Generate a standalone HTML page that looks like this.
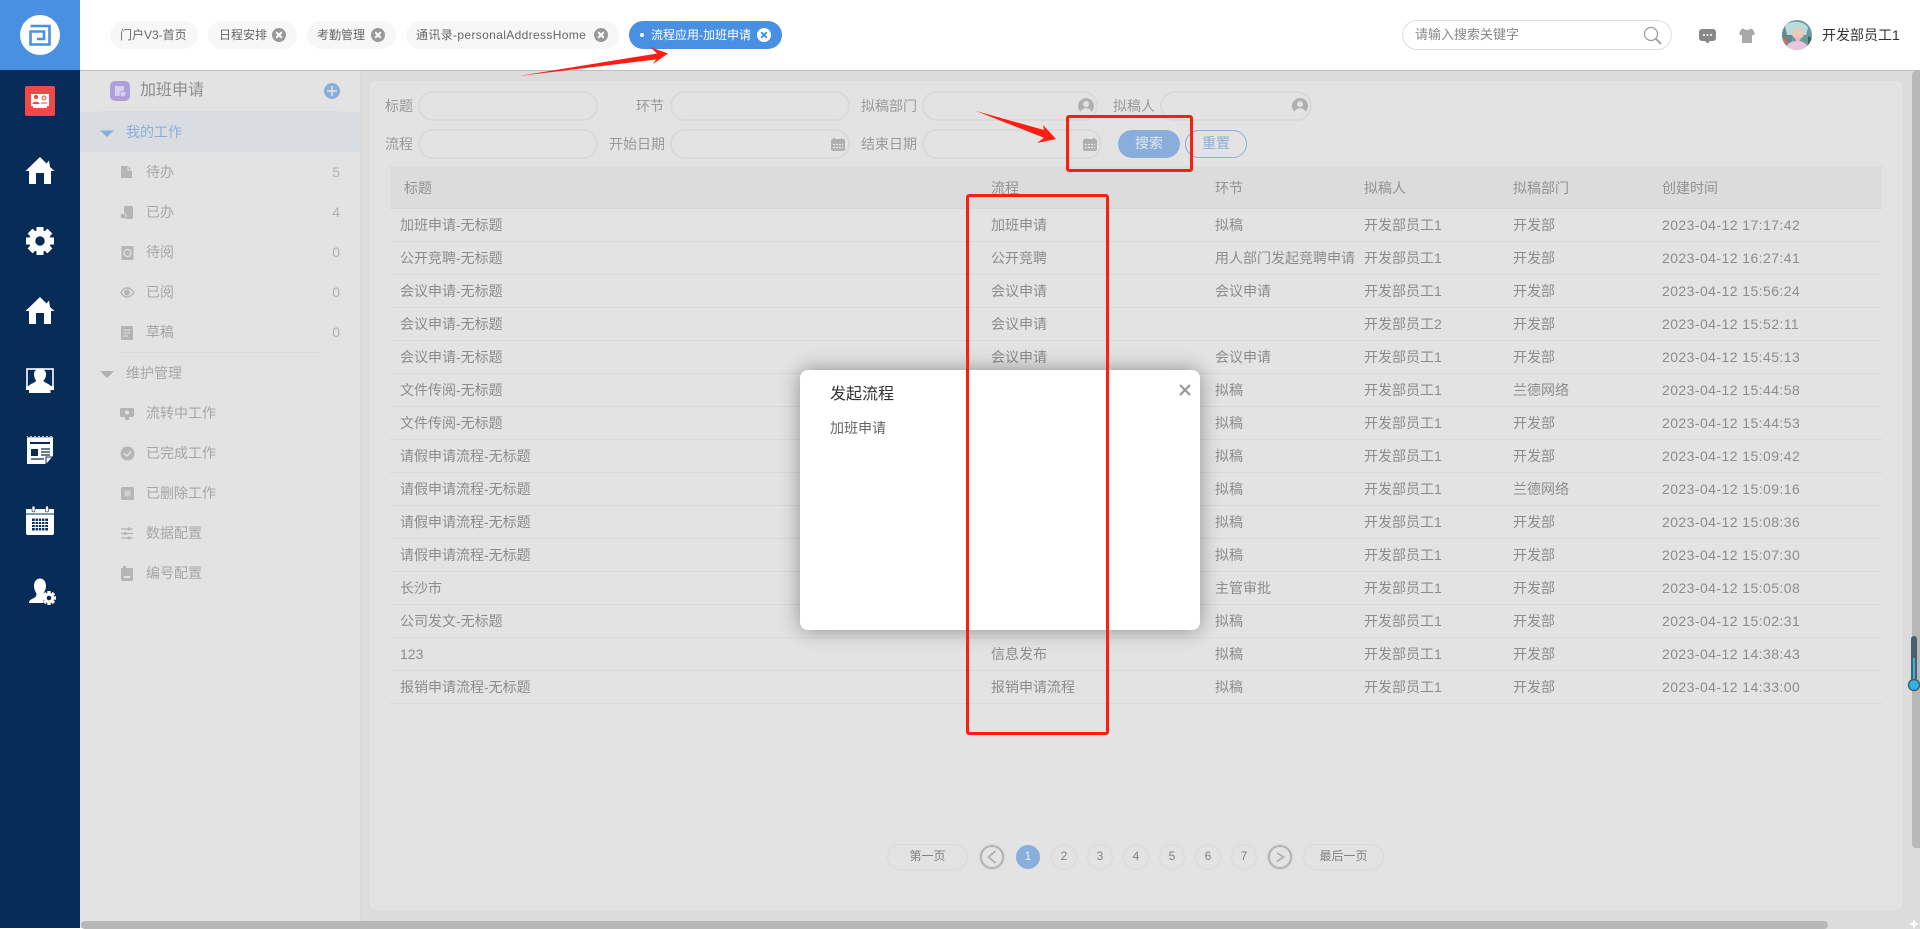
<!DOCTYPE html>
<html lang="zh"><head><meta charset="utf-8"><title>流程应用-加班申请</title>
<style>
*{box-sizing:border-box}
html,body{margin:0;padding:0;width:1920px;height:929px;overflow:hidden;background:#fff;font-family:"Liberation Sans","Noto Sans CJK SC",sans-serif;font-size:14px}
.a{position:absolute;white-space:nowrap}
.tab{position:absolute;top:21px;height:28px;border-radius:14px;background:#f7f7f7;color:#666;font-size:12px;line-height:28px;white-space:nowrap}
.x{position:absolute;top:7px;width:14px;height:14px;border-radius:50%;background:#999;color:#fff}
.x:before,.x:after{content:"";position:absolute;left:3px;top:6px;width:8px;height:2px;background:currentColor;transform:rotate(45deg)}
.x:after{transform:rotate(-45deg)}
.side{position:absolute;left:146px;color:#a6a6a6;font-size:14px;line-height:20px;white-space:nowrap}
.cnt{position:absolute;right:1580px;color:#b0b0b0;font-size:14px;line-height:20px}
.lb{position:absolute;color:#999;font-size:14px;line-height:20px;text-align:right;white-space:nowrap}
.in{position:absolute;height:30px;border:2px solid #dadada;border-radius:15px;background:#e3e3e3}
table{position:absolute;left:390px;top:166px;width:1492px;border-collapse:separate;border-spacing:0;table-layout:fixed;color:#8c8c8c;font-size:14px}
th{height:43px;background:#dcdcdc;font-weight:400;text-align:left;padding:2px 0 0 10px;border-bottom:1px solid #d8d8d8;color:#929292}
td{height:33px;padding:0 0 1px 10px;border-bottom:1px solid #d9d9d9;white-space:nowrap}
td:last-child{letter-spacing:.43px}
.pg{position:absolute;top:844px;height:26px;border:1.5px solid #dadada;border-radius:13px;text-align:center;font-size:12px;line-height:23px;color:#808080}
.rd{position:absolute;border:3px solid #ff1c10;border-radius:3px;z-index:30}
</style></head><body>

<!-- left nav -->
<div class="a" style="left:0;top:0;width:80px;height:928px;background:#082c58"></div>
<div class="a" style="left:0;top:0;width:80px;height:70px;background:#4a90e2"></div>
<svg class="a" style="left:0;top:0;z-index:3" width="80" height="640" viewBox="0 0 80 640">
<circle cx="40" cy="35" r="20" fill="#fff"/>
<path d="M30.500 26H49.500V44.500H30.500V31.500H44V39H37" fill="none" stroke="#4a90e2" stroke-width="2.600"/>
<rect x="25" y="86" width="30" height="30" rx="2" fill="#f24848"/>
<path d="M31 94H49V106H47V108H33V106H31Z" fill="#fff"/>
<circle cx="36" cy="97" r="2.200" fill="#f24848"/><path d="M32.500 104c0-3 7-3 7 0z" fill="#f24848"/><circle cx="44" cy="98" r="2" fill="none" stroke="#f24848"/><path d="M41 103H47" stroke="#f24848"/>
<path d="M40 157L46.500 163.500L49 160.500L50 167L54.500 171H51V184H44V173H36V184H29V171H25.500Z" fill="#fff"/>
<path d="M40 297L46.500 303.500L49 300.500L50 307L54.500 311H51V324H44V313H36V324H29V311H25.500Z" fill="#fff"/>
<g fill="#fff" transform="translate(40 241)">
<rect x="-3.500" y="-14" width="7" height="28"/><rect x="-3.500" y="-14" width="7" height="28" transform="rotate(45)"/><rect x="-3.500" y="-14" width="7" height="28" transform="rotate(90)"/><rect x="-3.500" y="-14" width="7" height="28" transform="rotate(135)"/>
<circle r="11"/><circle r="4.700" fill="#082c58"/></g>
<rect x="27" y="369" width="26" height="18" fill="none" stroke="#fff" stroke-width="1.600"/>
<path d="M26 386H54V390H26Z" fill="#fff"/>
<path d="M34 374c0-7 12-7 12 0c0 3-1 5-2.500 6.500c0 2 4 2.500 7 5v7.500H29v-7.500c3-2.500 7-3 7-5C35 379 34 377 34 374Z" fill="#fff"/>
<path d="M27 438H53V456L46 464H27Z" fill="#fff"/>
<path d="M27 436.500l2 2 2-2 2 2 2-2 2 2 2-2 2 2 2-2 2 2 2-2 2 2 2-2 2 2" fill="none" stroke="#fff"/>
<path d="M30 443H50" stroke="#082c58" stroke-width="2"/>
<rect x="31" y="449" width="7" height="7" fill="#082c58"/>
<path d="M41 449H50M41 452H50M41 455H50M31 459H44" stroke="#082c58" stroke-width="1.300"/>
<path d="M46 464V457H53" fill="none" stroke="#082c58"/>
<path d="M26 509H54V533a2 2 0 0 1-2 2H28a2 2 0 0 1-2-2Z" fill="#fff"/>
<rect x="32" y="506" width="3" height="6" rx="1.500" fill="#fff" stroke="#082c58" stroke-width=".6"/><rect x="45.500" y="506" width="3" height="6" rx="1.500" fill="#fff" stroke="#082c58" stroke-width=".6"/>
<path d="M26 514H54" stroke="#082c58"/>
<path d="M32 518.500H48v12H32Z" fill="#082c58"/>
<path d="M35.200 518v13M38.400 518v13M41.600 518v13M44.800 518v13M32 521.500H48M32 524.500H48M32 527.500H48" stroke="#fff" stroke-width=".9"/>
<path d="M34 586c0-10 12-10 12 0c0 3-1.500 5.500-2.500 7c0 2 1 3 2.500 3.500c-2 2-3 4-3 6.500H29c0-3 2-3.500 5-5c2-1 2.500-2.500 2.500-4.500C35.500 592 34 589 34 586Z" fill="#fff"/>
<g fill="#fff" transform="translate(49 598)"><rect x="-1.700" y="-7" width="3.400" height="14"/><rect x="-1.700" y="-7" width="3.400" height="14" transform="rotate(45)"/><rect x="-1.700" y="-7" width="3.400" height="14" transform="rotate(90)"/><rect x="-1.700" y="-7" width="3.400" height="14" transform="rotate(135)"/><circle r="5"/><circle r="2.300" fill="#082c58"/></g>
</svg>

<!-- header -->
<div class="a" style="left:80px;top:70px;width:1840px;height:1px;background:#bdbdbd"></div>
<div class="tab" style="left:110px;width:88px;padding-left:10px">门户V3-首页</div>
<div class="tab" style="left:208px;width:89px;padding-left:11px">日程安排<span class="x" style="left:64px"></span></div>
<div class="tab" style="left:307px;width:89px;padding-left:10px">考勤管理<span class="x" style="left:64px"></span></div>
<div class="tab" style="left:406px;width:213px;padding-left:10px;letter-spacing:.35px">通讯录-personalAddressHome<span class="x" style="left:188px"></span></div>
<div class="tab" style="left:629px;width:153px;padding-left:22px;background:#4a90e2;color:#fff"><span style="position:absolute;left:11px;top:12px;width:4px;height:4px;border-radius:50%;background:#fff"></span>流程应用-加班申请<span class="x" style="left:128px;background:#fff;color:#4a90e2"></span></div>

<div class="a" style="left:1402px;top:20px;width:270px;height:30px;border:1px solid #ddd;border-radius:15px;background:#fff;color:#888;font-size:13px;line-height:27px;padding-left:12px">请输入搜索关键字</div>
<svg class="a" style="left:1640px;top:20px" width="280" height="32" viewBox="1640 20 280 32">
<circle cx="1651" cy="34" r="6.500" fill="none" stroke="#999" stroke-width="1.200"/><path d="M1656 39L1661 44" stroke="#999" stroke-width="1.800"/>
<path d="M1702 29h11a3 3 0 0 1 3 3v6a3 3 0 0 1-3 3h-3l-2.500 2.500l-2.500-2.500h-3a3 3 0 0 1-3-3v-6a3 3 0 0 1 3-3Z" fill="#888"/>
<circle cx="1704" cy="35" r="1" fill="#fff"/><circle cx="1707.500" cy="35" r="1" fill="#fff"/><circle cx="1711" cy="35" r="1" fill="#fff"/>
<path d="M1743.500 28.500L1741 29.500L1739 34L1741.500 35.500L1742 35V43H1752V35L1752.500 35.500L1755 34L1753 29.500L1750.500 28.500C1749.500 30.500 1744.500 30.500 1743.500 28.500Z" fill="#a8a8a8"/>
<defs><clipPath id="av"><circle cx="1797" cy="35" r="15"/></clipPath></defs>
<g clip-path="url(#av)">
<rect x="1782" y="20" width="30" height="30" fill="#6f9b9e"/>
<rect x="1782" y="20" width="10" height="30" fill="#6a8790"/>
<path d="M1785 26c3-6 20-6 23 2l-2 7h-19Z" fill="#b8dcdc"/>
<circle cx="1798" cy="33" r="6" fill="#eccab8"/>
<path d="M1794 28h8v3h-8Z" fill="#d9d0c0"/>
<circle cx="1798" cy="39" r="2.500" fill="#f4b6c6"/>
<path d="M1786 50c0-7 6-9 11-9s11 2 11 9Z" fill="#e8c6de"/>
<path d="M1783 38l5 4l-3 6l-3-3Z" fill="#c9705f"/>
<path d="M1808 36l4 2v8l-4-2Z" fill="#44626a"/>
</g>
</svg>
<div class="a" style="left:1822px;top:25px;color:#333;line-height:20px">开发部员工1</div>

<!-- sidebar -->
<div class="a" style="left:80px;top:71px;width:280px;height:857px;background:#e3e3e3"></div>
<div class="a" style="left:360px;top:71px;width:2px;height:850px;background:#d8d8d8"></div>
<svg class="a" style="left:100px;top:71px" width="250" height="600" viewBox="100 71 250 600">
<rect x="110" y="81" width="20" height="20" rx="5" fill="#b09fd8"/>
<path d="M115 86H124V90L121 92.500L120 96H115Z" fill="#d8cfec"/><circle cx="123" cy="94" r="3" fill="#d8cfec" stroke="#b09fd8"/>
<circle cx="332" cy="91" r="8" fill="#8aaedb"/><path d="M332 86V96M327 91H337" stroke="#e3e3e3" stroke-width="1.500"/>
<path d="M100 371H114L107 378Z" fill="#b0b0b0"/>
<g fill="#b5b5b5">
<path d="M121 166H128L132 170V178H121Z"/><path d="M128 166V170H132" fill="none" stroke="#e3e3e3"/>
<path d="M124 207a2 2 0 0 1 2-1h5a2 2 0 0 1 2 2v10a1 1 0 0 1-1 1h-8Z"/><circle cx="123" cy="216" r="3" stroke="#e3e3e3"/>
<rect x="121.500" y="246" width="12" height="14" rx="1"/><circle cx="127.500" cy="253" r="3.500" fill="none" stroke="#e3e3e3" stroke-width="1.200"/>
<path d="M121 292.500C124 286.500 130 286.500 134 292.500C130 298.500 124 298.500 121 292.500Z" fill="none" stroke="#b5b5b5" stroke-width="1.500"/><circle cx="127" cy="292.500" r="3"/>
<path d="M121 327a1 1 0 0 1 1-1h10a1 1 0 0 1 1 1v12a1 1 0 0 1-1 1h-10a1 1 0 0 1-1-1Z"/><path d="M123.500 330H130M123.500 333H130M123.500 336H128" stroke="#e3e3e3"/>
<rect x="120" y="408" width="14" height="9" rx="1.500"/><rect x="125" y="417" width="4" height="3"/><circle cx="127" cy="412.500" r="2" fill="#e3e3e3"/>
<circle cx="127.500" cy="453.500" r="7"/><path d="M124 453.500L127 456L131 451.500" fill="none" stroke="#e3e3e3" stroke-width="1.500"/>
<rect x="121" y="487" width="13" height="13" rx="1.500"/><rect x="124.500" y="490.500" width="6" height="6" fill="#d0d0d0"/>
<path d="M121 529H133M121 533.500H133M121 538H133" stroke="#b5b5b5" stroke-width="1.300"/><circle cx="129" cy="529" r="1.600"/><circle cx="125" cy="533.500" r="1.600"/><circle cx="129" cy="538" r="1.600"/>
<rect x="121" y="568" width="12" height="13" rx="1.500"/><rect x="123" y="566" width="3" height="5"/><rect x="124" y="576" width="6" height="2" fill="#e3e3e3"/>
</g>
</svg>
<div class="a" style="left:140px;top:80px;color:#8c8c8c;font-size:16px;line-height:22px">加班申请</div>
<div class="a" style="left:100px;top:111px;width:240px;height:1px;background:#dcdcdc"></div>
<div class="a" style="left:80px;top:112px;width:280px;height:40px;background:#d9dde1"></div>
<svg class="a" style="left:100px;top:112px" width="20" height="40"><path d="M0 18.500H14L7 25Z" fill="#8aaedb"/></svg>
<div class="a" style="left:126px;top:122px;color:#8aaedb;line-height:20px">我的工作</div>
<div class="side" style="top:162px">待办</div><div class="cnt" style="top:162px">5</div>
<div class="side" style="top:202px">已办</div><div class="cnt" style="top:202px">4</div>
<div class="side" style="top:242px">待阅</div><div class="cnt" style="top:242px">0</div>
<div class="side" style="top:282px">已阅</div><div class="cnt" style="top:282px">0</div>
<div class="side" style="top:322px">草稿</div><div class="cnt" style="top:322px">0</div>
<div class="a" style="left:120px;top:352px;width:200px;height:1px;background:#dcdcdc"></div>
<div class="side" style="left:126px;top:363px">维护管理</div>
<div class="side" style="top:403px">流转中工作</div>
<div class="side" style="top:443px">已完成工作</div>
<div class="side" style="top:483px">已删除工作</div>
<div class="side" style="top:523px">数据配置</div>
<div class="side" style="top:563px">编号配置</div>

<!-- main -->
<div class="a" style="left:362px;top:71px;width:1558px;height:858px;background:#dcdcdc"></div>
<div class="a" style="left:370px;top:81px;width:1532px;height:829px;background:#e3e3e3;border-radius:6px"></div>

<div class="lb" style="left:370px;width:43px;top:96px">标题</div>
<div class="in" style="left:418px;top:91px;width:180px"></div>
<div class="lb" style="left:620px;width:44px;top:96px">环节</div>
<div class="in" style="left:670px;top:91px;width:180px"></div>
<div class="lb" style="left:861px;width:56px;top:96px">拟稿部门</div>
<div class="in" style="left:922px;top:91px;width:176px"></div>
<div class="lb" style="left:1113px;width:42px;top:96px">拟稿人</div>
<div class="in" style="left:1160px;top:91px;width:152px"></div>
<div class="lb" style="left:370px;width:43px;top:134px">流程</div>
<div class="in" style="left:418px;top:129px;width:180px"></div>
<div class="lb" style="left:609px;width:56px;top:134px">开始日期</div>
<div class="in" style="left:670px;top:129px;width:180px"></div>
<div class="lb" style="left:861px;width:56px;top:134px">结束日期</div>
<div class="in" style="left:922px;top:129px;width:180px"></div>
<svg class="a" style="left:820px;top:90px" width="500" height="70" viewBox="820 90 500 70">
<g fill="#b0b0b0"><circle cx="1086" cy="106" r="8"/><circle cx="1086" cy="104" r="3" fill="#e3e3e3"/><path d="M1080.500 112c1-5 10-5 11 0a8 8 0 0 1-11 0Z" fill="#e3e3e3"/>
<circle cx="1300" cy="106" r="8"/><circle cx="1300" cy="104" r="3" fill="#e3e3e3"/><path d="M1294.500 112c1-5 10-5 11 0a8 8 0 0 1-11 0Z" fill="#e3e3e3"/></g>
<g fill="#b0b0b0">
<rect x="831" y="139" width="14" height="12" rx="2"/><rect x="833.500" y="138" width="1.500" height="3"/><rect x="841" y="138" width="1.500" height="3"/>
<rect x="1083" y="139" width="14" height="12" rx="2"/><rect x="1085.500" y="138" width="1.500" height="3"/><rect x="1093" y="138" width="1.500" height="3"/>
</g>
<path d="M833 144.500h10M833 147.500h10M1085 144.500h10M1085 147.500h10" stroke="#e3e3e3" stroke-width="1.200" stroke-dasharray="2 1"/>
</svg>
<div class="a" style="left:1118px;top:130px;width:62px;height:28px;border-radius:14px;background:#8aaedb;color:#e3e8ef;text-align:center;line-height:27px">搜索</div>
<div class="a" style="left:1185px;top:130px;width:62px;height:28px;border-radius:14px;border:1px solid #8aaedb;color:#8aaedb;text-align:center;line-height:25px">重置</div>

<table>
<colgroup><col style="width:591px"><col style="width:224px"><col style="width:149px"><col style="width:149px"><col style="width:149px"><col style="width:230px"></colgroup>
<tr><th style="padding-left:14px">标题</th><th>流程</th><th>环节</th><th>拟稿人</th><th>拟稿部门</th><th>创建时间</th></tr>
<tr><td>加班申请-无标题</td><td>加班申请</td><td>拟稿</td><td>开发部员工1</td><td>开发部</td><td>2023-04-12 17:17:42</td></tr>
<tr><td>公开竞聘-无标题</td><td>公开竞聘</td><td>用人部门发起竞聘申请</td><td>开发部员工1</td><td>开发部</td><td>2023-04-12 16:27:41</td></tr>
<tr><td>会议申请-无标题</td><td>会议申请</td><td>会议申请</td><td>开发部员工1</td><td>开发部</td><td>2023-04-12 15:56:24</td></tr>
<tr><td>会议申请-无标题</td><td>会议申请</td><td></td><td>开发部员工2</td><td>开发部</td><td>2023-04-12 15:52:11</td></tr>
<tr><td>会议申请-无标题</td><td>会议申请</td><td>会议申请</td><td>开发部员工1</td><td>开发部</td><td>2023-04-12 15:45:13</td></tr>
<tr><td>文件传阅-无标题</td><td>文件传阅</td><td>拟稿</td><td>开发部员工1</td><td>兰德网络</td><td>2023-04-12 15:44:58</td></tr>
<tr><td>文件传阅-无标题</td><td>文件传阅</td><td>拟稿</td><td>开发部员工1</td><td>开发部</td><td>2023-04-12 15:44:53</td></tr>
<tr><td>请假申请流程-无标题</td><td>请假申请流程</td><td>拟稿</td><td>开发部员工1</td><td>开发部</td><td>2023-04-12 15:09:42</td></tr>
<tr><td>请假申请流程-无标题</td><td>请假申请流程</td><td>拟稿</td><td>开发部员工1</td><td>兰德网络</td><td>2023-04-12 15:09:16</td></tr>
<tr><td>请假申请流程-无标题</td><td>请假申请流程</td><td>拟稿</td><td>开发部员工1</td><td>开发部</td><td>2023-04-12 15:08:36</td></tr>
<tr><td>请假申请流程-无标题</td><td>请假申请流程</td><td>拟稿</td><td>开发部员工1</td><td>开发部</td><td>2023-04-12 15:07:30</td></tr>
<tr><td>长沙市</td><td>请假申请流程</td><td>主管审批</td><td>开发部员工1</td><td>开发部</td><td>2023-04-12 15:05:08</td></tr>
<tr><td>公司发文-无标题</td><td>公司发文</td><td>拟稿</td><td>开发部员工1</td><td>开发部</td><td>2023-04-12 15:02:31</td></tr>
<tr><td>123</td><td>信息发布</td><td>拟稿</td><td>开发部员工1</td><td>开发部</td><td>2023-04-12 14:38:43</td></tr>
<tr><td>报销申请流程-无标题</td><td>报销申请流程</td><td>拟稿</td><td>开发部员工1</td><td>开发部</td><td>2023-04-12 14:33:00</td></tr>
</table>

<!-- pagination -->
<div class="pg" style="left:887px;width:81px">第一页</div>
<div class="pg" style="left:980px;top:845px;width:24px;height:24px;border-radius:12px;border:2px solid #b4b4b4;box-shadow:0 0 2px #bbb;font-size:0"></div>
<svg class="a" style="left:980px;top:844px" width="24" height="26"><path d="M15.500 7L8.500 13L15.500 19" fill="none" stroke="#aaa" stroke-width="1.600"/></svg>
<div class="pg" style="left:1016px;top:845px;width:24px;height:24px;border-radius:12px;background:#8aaedb;border-color:#8aaedb;color:#e6ecf4;line-height:21px">1</div>
<div class="pg" style="left:1051px;width:26px">2</div>
<div class="pg" style="left:1087px;width:26px">3</div>
<div class="pg" style="left:1123px;width:26px">4</div>
<div class="pg" style="left:1159px;width:26px">5</div>
<div class="pg" style="left:1195px;width:26px">6</div>
<div class="pg" style="left:1231px;width:26px">7</div>
<div class="pg" style="left:1268px;top:845px;width:24px;height:24px;border-radius:12px;border:2px solid #b4b4b4;box-shadow:0 0 2px #bbb;font-size:0"></div>
<svg class="a" style="left:1268px;top:844px" width="24" height="26"><path d="M9 9L15.500 13L9 17.500" fill="none" stroke="#aaa" stroke-width="1.600"/></svg>
<div class="pg" style="left:1303px;width:81px">最后一页</div>

<!-- scrollbars -->
<div class="a" style="left:1912px;top:71px;width:8px;height:777px;background:#b8b8b8;border-radius:4px 0 0 4px"></div>
<div class="a" style="left:81px;top:921px;width:1747px;height:8px;background:#b8b8b8;border-radius:4px"></div>
<svg class="a" style="left:1905px;top:630px;z-index:5" width="15" height="70" viewBox="1905 630 15 70">
<rect x="1911" y="636" width="6" height="46" rx="3" fill="#4c5d6b"/>
<rect x="1913" y="658" width="2" height="24" fill="#2db5ea"/>
<circle cx="1914" cy="685" r="5.500" fill="#2db5ea" stroke="#4c5d6b" stroke-width="1.500"/>
</svg>
<svg class="a" style="left:1908px;top:918px" width="12" height="11"><path d="M6 1L7.500 4.500L11 6L7.500 7.500L6 11L4.500 7.500L1 6L4.500 4.500Z" fill="#fff"/></svg>

<!-- modal -->
<div class="a" style="left:800px;top:370px;width:400px;height:260px;background:#fff;border-radius:8px;box-shadow:0 0 20px rgba(0,0,0,.38);z-index:20"></div>
<div class="a" style="left:830px;top:384px;font-size:16px;line-height:22px;color:#333;z-index:21">发起流程</div>
<div class="a" style="left:830px;top:418px;line-height:20px;color:#666;z-index:21">加班申请</div>
<svg class="a" style="left:1178px;top:383px;z-index:21" width="14" height="14"><path d="M2 2L12 12M12 2L2 12" stroke="#999" stroke-width="2.200"/></svg>

<!-- annotations -->
<div class="rd" style="left:1066px;top:115px;width:127px;height:57px"></div>
<div class="rd" style="left:966px;top:194px;width:143px;height:541px"></div>
<svg class="a" style="left:0;top:0;z-index:31" width="1920" height="929" pointer-events="none">
<path d="M519 76L657 53.500L650 47L668 53.500L653 64L656 59.500Z" fill="#ff1c10"/>
<path d="M976 111L1044 130L1043 125L1056 139L1037 143L1044 137.700Z" fill="#ff1c10"/>
</svg>
</body></html>
